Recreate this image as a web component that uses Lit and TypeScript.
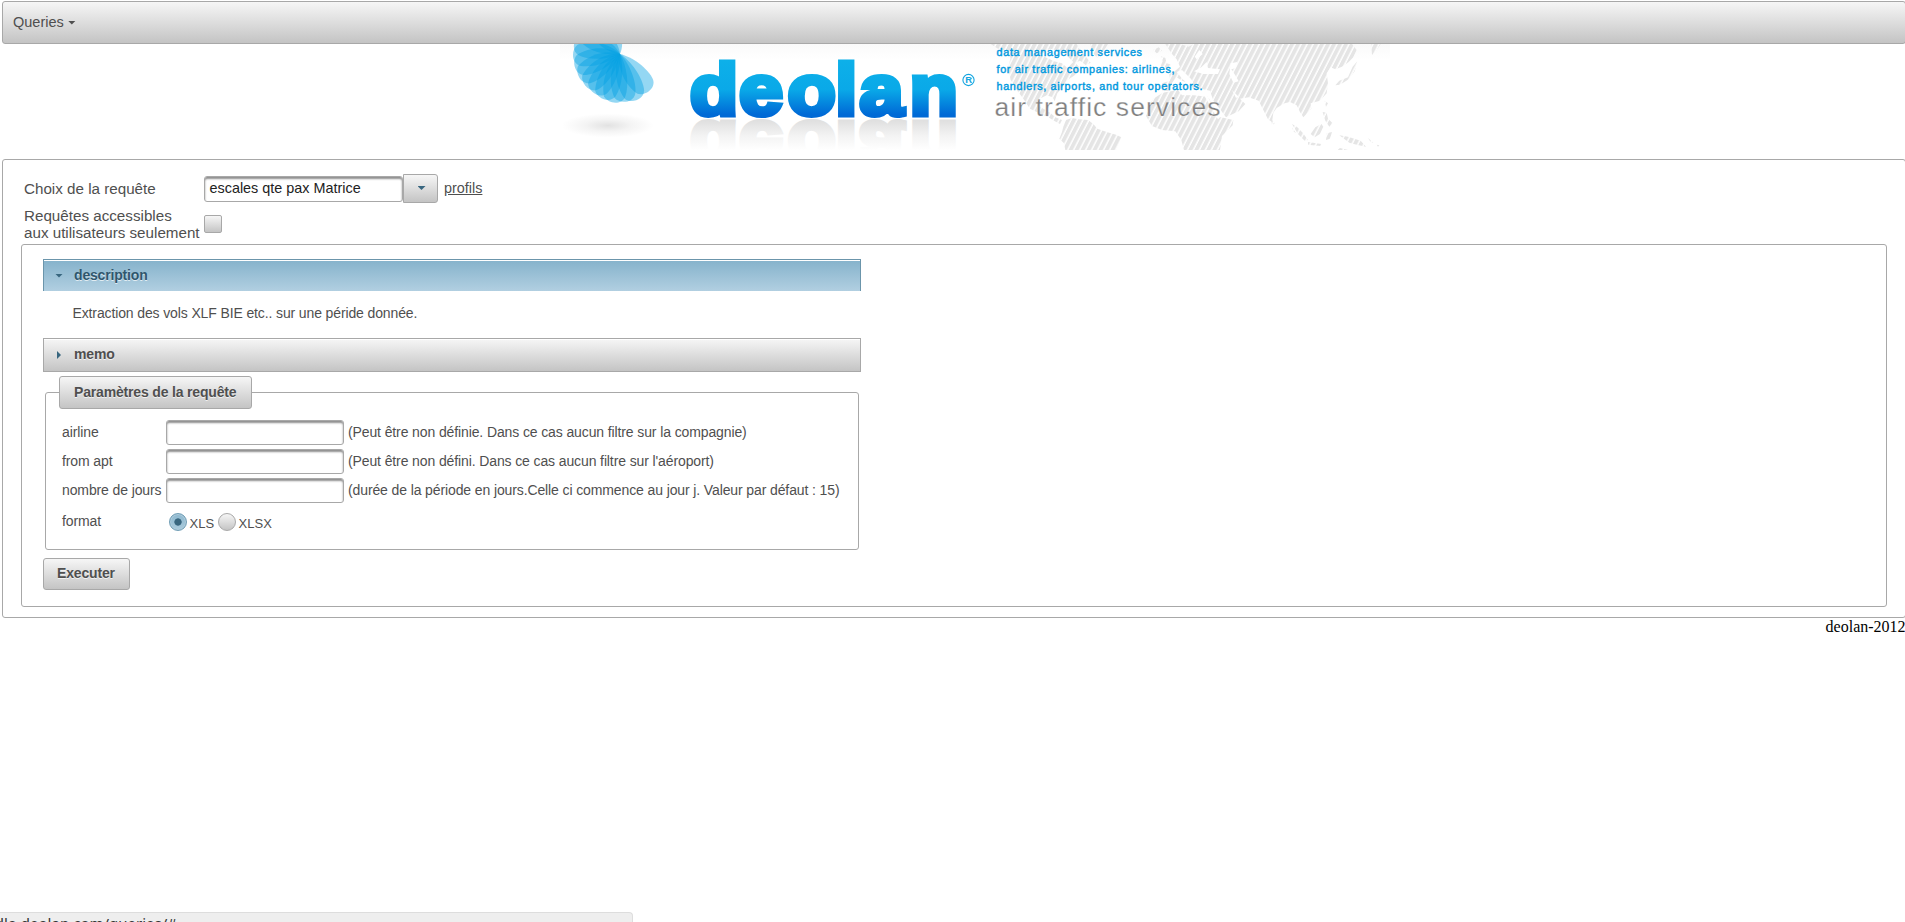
import { LitElement, html, css, svg } from "lit";
import { customElement } from "lit/decorators.js";

const PETALS: [number, number][] = [
  [-37, 47], [-19, 49], [-6, 48], [8, 49], [21, 48], [34, 47],
  [47, 47], [61, 47], [75, 47], [89, 47], [104, 47], [122, 44], [145, 34],
];

@customElement("site-banner")
class SiteBanner extends LitElement {
  static styles = css`
    :host { display: block; height: 107px; margin-left: 560px; width: 830px; }
    svg { display: block; }
    text { font-family: "Liberation Sans", Arial, sans-serif; }
    .brand { font-size: 72px; font-weight: 700; stroke-width: 5px; }
    .pitch { font-size: 10.8px; fill: #0098de; stroke: #0098de; stroke-width: 0.4px; }
    .tag { font-size: 26.5px; fill: #808080; stroke: #fff; stroke-width: 0.25px; }
    .reg { font-size: 9.5px; font-weight: 700; fill: #13a5e0; }
  `;
  petal(a: number, l: number) {
    return svg`<path transform="translate(620 54) rotate(${a})" fill="#009fe3" fill-opacity=".42"
      d="M0 0 C8 ${l * 0.2} 14 ${l * 0.6} 11 ${l * 0.86} C8 ${l * 1.04} -5 ${l * 1.04} -10 ${l * 0.9} C-15 ${l * 0.6} -11 ${l * 0.2} 0 0Z"/>`;
  }
  render() {
    return html`<svg width="830" height="107" viewBox="560 44 830 107">
      <defs>
        <linearGradient id="blue" gradientUnits="userSpaceOnUse" x1="0" y1="60" x2="0" y2="119">
          <stop offset="0" stop-color="#0db0e9"/><stop offset=".5" stop-color="#0aa9e8"/>
          <stop offset=".92" stop-color="#006ad6"/><stop offset="1" stop-color="#0068d4"/>
        </linearGradient>
        <linearGradient id="fade" gradientUnits="userSpaceOnUse" x1="0" y1="117" x2="0" y2="88">
          <stop offset="0" stop-color="#e0e0e0"/><stop offset=".5" stop-color="#f3f3f3"/>
          <stop offset="1" stop-color="#fff"/>
        </linearGradient>
        <linearGradient id="sky" x1="0" y1="0" x2="0" y2="1">
          <stop offset="0" stop-color="#fafafa"/><stop offset="1" stop-color="#fff"/>
        </linearGradient>
        <radialGradient id="shade"><stop offset="0" stop-color="#e2e2e2"/><stop offset=".5" stop-color="#f4f4f4"/><stop offset="1" stop-color="#fff"/></radialGradient>
        <pattern id="hatch" width="16" height="16" patternUnits="userSpaceOnUse" patternTransform="rotate(27)">
          <rect width="16" height="16" fill="#fff"/><rect width="11.5" height="16" fill="#e5e5e5"/>
        </pattern>
      </defs>
      <rect x="560" y="44" width="830" height="16" fill="url(#sky)"/>
      <g transform="translate(980 30) scale(.33333)" fill="url(#hatch)">
        <path d="M32 42 L60 60 L78 62 L92 84 L84 112 L92 150 L112 182 L130 206 L150 236 L178 250 L205 262 L222 272 L240 282 L246 270 L226 262 L212 250 L196 240 L176 228 L176 208 L200 196 L218 202 L224 214 L232 190 L248 172 L262 150 L290 132 L302 116 L286 98 L300 92 L318 106 L332 98 L318 80 L300 60 L290 42Z"/>
        <path d="M330 42 L340 70 L352 84 L366 68 L378 52 L384 42Z"/>
        <path d="M258 270 L276 264 L296 268 L324 270 L340 282 L352 296 L380 306 L408 314 L424 322 L418 338 L408 360 L256 360 L252 340 L238 326 L246 306 L250 290Z"/>
        <path d="M520 60 L536 52 L546 62 L530 70Z M544 78 L556 84 L560 100 L574 104 L566 114 L542 108 L548 94Z"/>
        <path d="M556 42 L600 42 L626 50 L640 42 L1116 42 L1130 60 L1120 82 L1106 96 L1086 110 L1066 118 L1052 112 L1040 130 L1044 160 L1040 190 L1020 212 L992 220 L994 236 L970 262 L960 246 L950 226 L930 216 L914 220 L890 234 L880 248 L876 276 L864 268 L850 240 L836 212 L806 202 L780 206 L796 222 L776 244 L738 262 L722 240 L700 212 L690 182 L664 176 L640 180 L634 162 L606 152 L590 142 L578 156 L566 182 L548 184 L546 160 L570 152 L568 132 L586 122 L600 110 L590 88 L576 72Z"/>
        <path d="M548 188 L594 180 L606 196 L640 196 L684 200 L700 230 L716 260 L760 270 L758 286 L726 318 L720 360 L612 360 L604 330 L586 304 L546 300 L516 288 L498 258 L504 228 L520 206Z"/>
        <path d="M1118 110 L1132 94 L1124 124 L1106 148 L1080 164 L1066 166 L1078 152 L1104 142Z M1174 42 L1202 42 L1190 60 L1176 76Z"/>
        <path d="M992 312 L1006 292 L1024 282 L1030 290 L1020 312 L1004 322Z M1028 246 L1040 248 L1044 266 L1058 280 L1048 290 L1036 272Z M936 282 L952 292 L968 308 L984 330 L974 332 L954 312Z M984 336 L1024 342 L1022 348 L984 344Z M1040 310 L1056 306 L1050 326 L1038 330Z M1078 316 L1104 320 L1142 332 L1158 350 L1130 344 L1108 338Z M874 268 L884 280 L876 286Z M1034 212 L1044 220 L1038 230Z M1164 324 L1180 338 L1172 336Z M1080 354 L1104 360 L1072 360Z M936 292 L948 310 L940 304Z M1190 344 L1198 346 L1194 350Z"/>
        <g fill="#fff">
          <path d="M642 124 L664 112 L680 96 L684 114 L720 118 L714 132 L670 132Z M752 100 L772 96 L768 114 L754 118 L766 136 L776 154 L760 158 L748 132Z M590 126 L606 120 L634 148 L640 160 L628 166 L608 148Z"/>
          <path d="M672 196 L680 196 L720 262 L714 268 Z M756 180 L776 200 L768 204Z M180 74 L210 56 L250 66 L280 96 L262 114 L246 100 L222 94Z M658 60 L668 72 L650 88 L644 80Z"/>
        </g>
      </g>
      ${PETALS.map(([a, l]) => this.petal(a, l))}
      <ellipse cx="608" cy="125.500" rx="46" ry="12" fill="url(#shade)"/>
      <g transform="translate(0 238) scale(1.1 -1)">
        <text class="brand" x="627 671.800 715.900 759.300 781.400 826.800" y="116" fill="url(#fade)" stroke="url(#fade)" aria-hidden="true">deolan</text>
      </g>
      <g transform="scale(1.1 1)">
        <text class="brand" x="627 671.800 715.900 759.300 781.400 826.800" y="115.500" fill="url(#blue)" stroke="url(#blue)">deolan</text>
      </g>
      <circle cx="968.500" cy="80" r="5.600" fill="none" stroke="#13a5e0" stroke-width="1.100"/>
      <text class="reg" x="965.300" y="83.400">R</text>
      <text class="pitch" x="996.500" y="56" textLength="145.500">data management services</text>
      <text class="pitch" x="996.500" y="73" textLength="178">for air traffic companies: airlines,</text>
      <text class="pitch" x="996.500" y="90" textLength="206">handlers, airports, and tour operators.</text>
      <text class="tag" x="994.500" y="116" textLength="226">air traffic services</text>
    </svg>`;
  }
}

const FIELDS = [
  ["airline", "(Peut être non définie. Dans ce cas aucun filtre sur la compagnie)"],
  ["from apt", "(Peut être non défini. Dans ce cas aucun filtre sur l'aéroport)"],
  ["nombre de jours", "(durée de la période en jours.Celle ci commence au jour j. Valeur par défaut : 15)"],
];

@customElement("app-root")
class AppRoot extends LitElement {
  static styles = css`
    :host {
      display: block; position: relative; height: 922px; overflow: hidden; background: #fff;
      font-family: "Liberation Sans", Arial, sans-serif; font-size: 14px; line-height: 16px; color: #4f4f4f;
    }
    * { box-sizing: border-box; }
    .grey { border: 1px solid #a8a8a8; background: linear-gradient(#f6f6f6, #c4c4c4); }
    .raised { text-shadow: 0 1px 0 rgba(255,255,255,.7); font-weight: 700; letter-spacing: -0.17px; }
    .bar { margin: 1px 0 0 2px; width: 1904px; height: 43px; border-radius: 3px; padding: 0 10px;
      display: flex; align-items: center; gap: 4px; font-size: 14.5px; }
    .bar span { margin-top: -1px; }
    .down { width: 8px; height: 4px; background: currentColor; clip-path: polygon(0 0, 100% 0, 50% 100%); }
    .right { width: 4px; height: 8px; background: #38667f; clip-path: polygon(0 0, 100% 50%, 0 100%); }
    .teal { color: #38667f; }
    .panel { margin: 8px 0 0 2px; width: 1904px; height: 459px; border: 1px solid #a8a8a8; border-radius: 3px; padding: 14px 18px; }
    .choice { display: grid; grid-template-columns: 180px 1fr; grid-template-rows: 29px 41px; padding-left: 3px; font-size: 15.2px; line-height: 17px; }
    .choice > div { display: flex; align-items: center; }
    .choice .check { padding-top: 1px; }
    .input { border: 1px solid #a8a8a8; border-radius: 3px; background: #fff; box-shadow: inset 0 2px 2px #8f8f8f; }
    .combo { width: 199px; height: 26px; padding: 3px 4.5px; font-size: 14.4px; color: #222; line-height: 17px; }
    .drop { width: 35px; height: 29px; border-radius: 0 3px 3px 0; display: flex; align-items: center; justify-content: center; padding-left: 2px; }
    .drop .down { margin-top: -1px; }
    .link { font-size: 14.4px; margin: -1px 0 0 6px; text-decoration: underline; }
    .box { width: 18px; height: 18px; border-radius: 2px; }
    .inner { width: 1866px; height: 363px; border: 1px solid #a8a8a8; border-radius: 3px; padding: 14px 21px; }
    .head { width: 818px; display: flex; align-items: center; box-shadow: inset 0 1px 0 #fff; padding-left: 11px; }
    .head .ic { width: 19px; display: flex; }
    .head .right { margin-left: 2px; }
    .open { height: 32px; border: 1px solid #6b95ab; border-bottom: 0; background: linear-gradient(#85b2cb, #b1cfe1); color: #2f566d; }
    .open b { margin-top: -2px; }
    .text { height: 47px; padding: 14px 0 0 29.5px; letter-spacing: -0.125px; }
    .memo { height: 34px; }
    .memo b { margin-top: -3px; }
    .set { width: 814px; height: 174px; margin: 4px 0 0 2px; padding: 0 12px 0 13px; border: 1px solid #a8a8a8; border-radius: 3px; }
    .legend { width: 193px; height: 33px; border-radius: 3px; padding: 7px 0 0 14px; white-space: nowrap; }
    .rows { display: grid; gap: 4px; padding: 11px 0 0 3px; letter-spacing: -0.115px; }
    .row { display: grid; grid-template-columns: 104px 178px 1fr; grid-template-rows: 25px; height: 25px; align-items: center; white-space: nowrap; }
    .name, .hint { margin-top: -2px; }
    .row .hint { padding-left: 4px; }
    .row .input { height: 25px; }
    .radios { display: flex; align-items: center; padding: 6px 0 0 3px; font-size: 13px; letter-spacing: 0; height: 30px; }
    .radio { width: 18px; height: 18px; border-radius: 50%; margin-top: -1px; }
    .on { border: 1px solid #6f9db5; background: radial-gradient(circle, #38667f 3.3px, transparent 4px), linear-gradient(#8db8cf, #a9cadc);
      box-shadow: inset 0 0 0 1px #aecbdb; }
    .radios span { margin: 3px 4px 0 2.5px; }
    .format { margin-top: 3px; }
    .exec { width: 87px; height: 32px; margin-top: 8px; border-radius: 3px; display: block; padding: 6px 0 0 13px; }
    .foot { font: 16px/18px "Liberation Serif", "Times New Roman", serif; color: #000; text-align: right; margin-right: -0.6px; }
    .status { position: absolute; left: 0; bottom: 0; width: 633px; height: 10px; overflow: hidden;
      border: 1px solid #ddd; border-width: 1px 1px 0 0; border-radius: 0 4px 0 0; background: #eee; }
    .url { width: 177px; display: flex; justify-content: flex-end; font: 15px/20px "Noto Sans", "Open Sans", sans-serif; color: #333; white-space: nowrap; }
  `;
  render() {
    return html`
      <nav class="bar grey"><span>Queries</span><i class="down"></i></nav>
      <site-banner></site-banner>
      <main class="panel">
        <section class="choice">
          <div>Choix de la requête</div>
          <div><div class="input combo">escales qte pax Matrice</div><div class="drop grey teal"><i class="down"></i></div><a class="link">profils</a></div>
          <div>Requêtes accessibles<br>aux utilisateurs seulement</div>
          <div class="check"><i class="box grey"></i></div>
        </section>
        <section class="inner">
          <div class="head open raised"><div class="ic teal"><i class="down"></i></div><b>description</b></div>
          <div class="text">Extraction des vols XLF BIE etc.. sur une péride donnée.</div>
          <div class="head memo grey raised"><div class="ic"><i class="right"></i></div><b>memo</b></div>
          <fieldset class="set">
            <legend class="legend grey raised">Paramètres de la requête</legend>
            <div class="rows">
              ${FIELDS.map(([n, h]) => html`<div class="row"><span class="name">${n}</span><div class="input"></div><span class="hint">${h}</span></div>`)}
              <div class="row"><span class="format">format</span>
                <div class="radios"><i class="radio on"></i><span>XLS</span><i class="radio grey"></i><span>XLSX</span></div></div>
            </div>
          </fieldset>
          <div class="exec grey raised">Executer</div>
        </section>
      </main>
      <footer class="foot">deolan-2012</footer>
      <div class="status"><div class="url">dlo.deolan.com/queries/#</div></div>
    `;
  }
}
